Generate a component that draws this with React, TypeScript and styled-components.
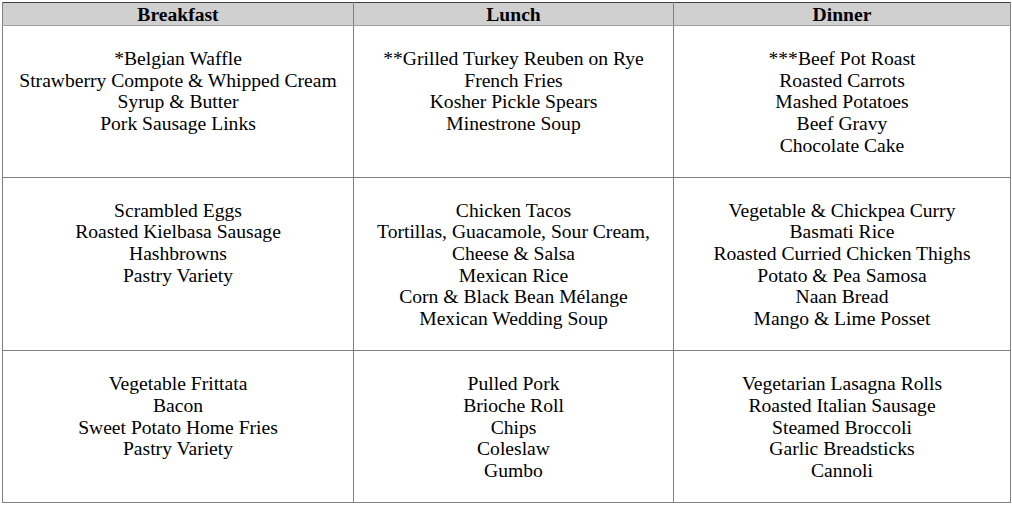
import React from "react";
import styled, {createGlobalStyle} from "styled-components";

const Global = createGlobalStyle`
html, body {
margin: 0;
padding: 0;
background: #fff;
}
body {
padding: 2px;
font-family: "Liberation Serif", "Times New Roman", serif;
color: #000;
}
`;

const Table = styled.table`
border-collapse: collapse;
border: 1px solid #404040;
table-layout: fixed;
width: 1008px;
`;

const Col = styled.col<{ $w: number }>`
width: ${p => p.$w}px;
`;

const Head = styled.th`
background: #d0d0d0;
border-left: 1px solid #808080;
border-right: 1px solid #808080;
border-bottom: 1px solid #a0a0a0;
font-size: 19.6px;
line-height: 21px;
font-weight: bold;
padding: 1px 0 0;
height: 21px;
text-align: center;
`;

const Cell = styled.td`
border: 1px solid #808080;
vertical-align: top;
text-align: center;
font-size: 19.6px;
line-height: 21.65px;
padding: 22px 2px 20.5px;
>div{
white-space: nowrap;
}
`;

const menu: string[][][] = [
  [
    ["*Belgian Waffle", "Strawberry Compote & Whipped Cream", "Syrup & Butter", "Pork Sausage Links"],
    ["**Grilled Turkey Reuben on Rye", "French Fries", "Kosher Pickle Spears", "Minestrone Soup"],
    ["***Beef Pot Roast", "Roasted Carrots", "Mashed Potatoes", "Beef Gravy", "Chocolate Cake"],
  ],
  [
    ["Scrambled Eggs", "Roasted Kielbasa Sausage", "Hashbrowns", "Pastry Variety"],
    ["Chicken Tacos", "Tortillas, Guacamole, Sour Cream,", "Cheese & Salsa", "Mexican Rice", "Corn & Black Bean Mélange", "Mexican Wedding Soup"],
    ["Vegetable & Chickpea Curry", "Basmati Rice", "Roasted Curried Chicken Thighs", "Potato & Pea Samosa", "Naan Bread", "Mango & Lime Posset"],
  ],
  [
    ["Vegetable Frittata", "Bacon", "Sweet Potato Home Fries", "Pastry Variety"],
    ["Pulled Pork", "Brioche Roll", "Chips", "Coleslaw", "Gumbo"],
    ["Vegetarian Lasagna Rolls", "Roasted Italian Sausage", "Steamed Broccoli", "Garlic Breadsticks", "Cannoli"],
  ],
];

export default function App() {
  return (
    <>
      <Global/>
      <Table>
        <colgroup>
          <Col $w={351}/>
          <Col $w={320}/>
          <Col $w={337}/>
        </colgroup>
        <thead>
          <tr>
            <Head>Breakfast</Head>
            <Head>Lunch</Head>
            <Head>Dinner</Head>
          </tr>
        </thead>
        <tbody>
          {menu.map((row, i) => (
            <tr key={i}>
              {row.map((cell, j) => (
                <Cell key={j}>
                  {cell.map(item => <div key={item}>{item}</div>)}
                </Cell>
              ))}
            </tr>
          ))}
        </tbody>
      </Table>
    </>
  );
}
